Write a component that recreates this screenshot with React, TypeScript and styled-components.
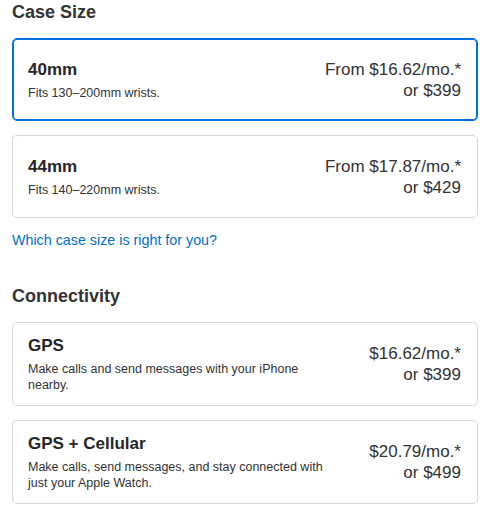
import { createGlobalStyle } from "styled-components";
import styled from "styled-components";

const GlobalStyle = createGlobalStyle`
  html, body {
    margin: 0;
    padding: 0;
    background: #ffffff;
  }
  body {
    font-family: "Liberation Sans", Arial, sans-serif;
    color: #1d1d1f;
  }
`;

const Page = styled.div`
  width: 466px;
  padding: 0 22px 0 12px;
`;

const Section = styled.section`
  display: flex;
  flex-direction: column;
`;

const Heading = styled.h2`
  margin: 0 0 14px;
  font-size: 18px;
  line-height: 24px;
  font-weight: 700;
  color: #333333;
`;

const OptionList = styled.div`
  display: flex;
  flex-direction: column;
  gap: 14px;
`;

const Option = styled.div<{ $selected?: boolean }>`
  display: flex;
  align-items: center;
  justify-content: space-between;
  min-height: 57px;
  padding: 12px 16px 12px 15px;
  border: 1px solid ${(p) => (p.$selected ? "#0071e3" : "#d6d6d6")};
  box-shadow: ${(p) => (p.$selected ? "inset 0 0 0 1px #0071e3" : "none")};
  border-radius: 5px;
  background: #ffffff;
  cursor: pointer;
`;

const OptionInfo = styled.div`
  display: flex;
  flex-direction: column;
  max-width: 300px;
`;

const OptionTitle = styled.span`
  font-size: 17px;
  line-height: 22px;
  font-weight: 700;
  color: #262626;
`;

const OptionText = styled.span`
  margin-top: 4px;
  font-size: 12.5px;
  line-height: 16px;
  color: #333333;
`;

const Price = styled.div`
  display: flex;
  flex-direction: column;
  align-items: flex-end;
  font-size: 17px;
  line-height: 21px;
  color: #333333;
  text-align: right;
  white-space: nowrap;
`;

const HelpLink = styled.a`
  display: block;
  margin: 12px 0 34px;
  font-size: 14.3px;
  line-height: 20px;
  color: #0070c9;
  text-decoration: none;
  cursor: pointer;
`;

type Choice = {
  title: string;
  text: string;
  monthly: string;
  full: string;
  selected?: boolean;
};

const sizes: Choice[] = [
  {
    title: "40mm",
    text: "Fits 130–200mm wrists.",
    monthly: "From $16.62/mo.*",
    full: "or $399",
    selected: true,
  },
  {
    title: "44mm",
    text: "Fits 140–220mm wrists.",
    monthly: "From $17.87/mo.*",
    full: "or $429",
  },
];

const connectivity: Choice[] = [
  {
    title: "GPS",
    text: "Make calls and send messages with your iPhone nearby.",
    monthly: "$16.62/mo.*",
    full: "or $399",
  },
  {
    title: "GPS + Cellular",
    text: "Make calls, send messages, and stay connected with just your Apple Watch.",
    monthly: "$20.79/mo.*",
    full: "or $499",
  },
];

const OptionCard = ({ choice }: { choice: Choice }) => (
  <Option $selected={choice.selected}>
    <OptionInfo>
      <OptionTitle>{choice.title}</OptionTitle>
      <OptionText>{choice.text}</OptionText>
    </OptionInfo>
    <Price>
      <span>{choice.monthly}</span>
      <span>{choice.full}</span>
    </Price>
  </Option>
);

const App = () => {
  return (
    <>
      <GlobalStyle />
      <Page>
        <Section>
          <Heading>Case Size</Heading>
          <OptionList>
            {sizes.map((s) => (
              <OptionCard key={s.title} choice={s} />
            ))}
          </OptionList>
          <HelpLink>Which case size is right for you?</HelpLink>
        </Section>
        <Section>
          <Heading>Connectivity</Heading>
          <OptionList>
            {connectivity.map((c) => (
              <OptionCard key={c.title} choice={c} />
            ))}
          </OptionList>
        </Section>
      </Page>
    </>
  );
};

export default App;
